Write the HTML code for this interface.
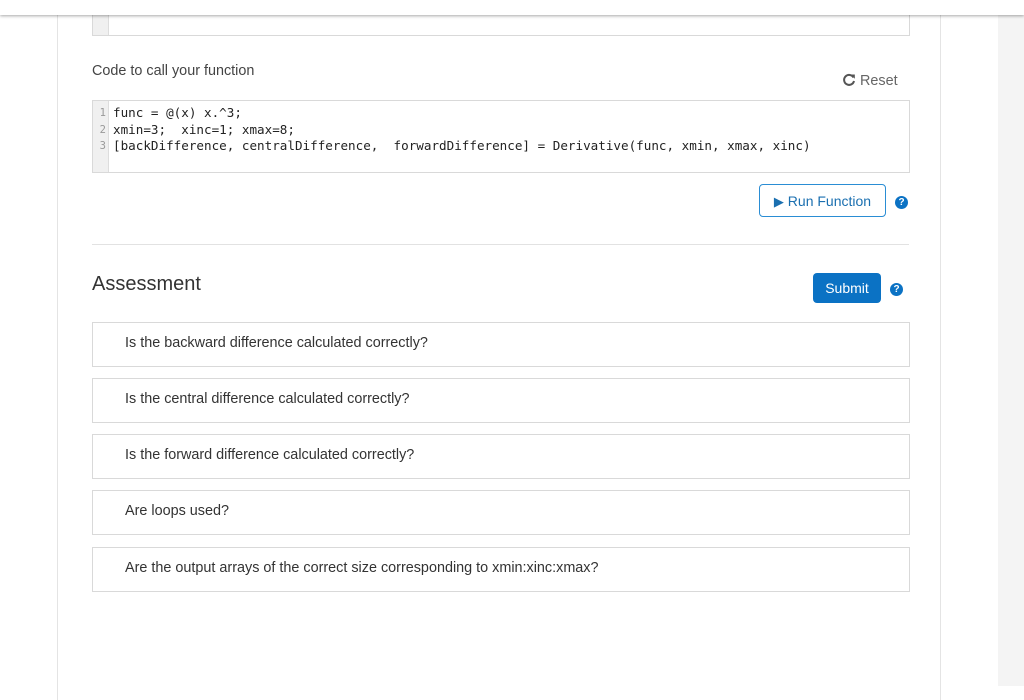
<!DOCTYPE html>
<html><head><style>
body{margin:0;width:1024px;height:686px;overflow:hidden;background:#fff;font-family:"Liberation Sans",Arial,sans-serif;color:#333;position:relative}
.topbar{position:absolute;left:0;top:0;width:1024px;height:15px;background:#fff;box-shadow:0 1px 3px rgba(0,0,0,.35);z-index:3}
.rightgray{position:absolute;left:998px;top:0;width:26px;height:686px;background:#f4f4f4}
.card{position:absolute;left:57px;top:0;width:882px;height:700px;border-left:1px solid #e4e4e4;border-right:1px solid #e4e4e4;background:#fff}
.box{position:absolute;left:92px;width:816px;border:1px solid #d9d9d9;background:#fff}
.gut{position:absolute;left:0;top:0;bottom:0;width:15px;background:#f0f0f0;border-right:1px solid #ddd}
.code{position:absolute;left:20px;top:4px;font-family:"DejaVu Sans Mono","Liberation Mono",monospace;font-size:12.6px;line-height:16.5px;white-space:pre;color:#222}
.ln{position:absolute;left:0;top:4px;width:13px;text-align:right;font-family:"DejaVu Sans Mono",monospace;font-size:10.5px;line-height:16.5px;color:#999}
.q{position:absolute;left:92px;width:816px;height:43px;border:1px solid #d9d9d9;font-size:14.4px;line-height:40px;text-indent:32px;color:#333}
</style></head><body>
<div class="rightgray"></div>
<div class="card"></div>
<div class="topbar"></div>
<div class="box" style="top:0;height:34px"><div class="gut"></div></div>
<div style="position:absolute;left:92px;top:63px;font-size:14.4px;color:#444">Code to call your function</div>
<div style="position:absolute;left:842px;top:73px;font-size:14.4px;color:#666"><svg width="14" height="14" viewBox="0 0 14 14" style="vertical-align:-2px"><path d="M11.5 4.5A5 5 0 1 0 12 8" fill="none" stroke="#555" stroke-width="2"/><path d="M8.5 1.5L12.8 1.5 12.8 5.8Z" fill="#555"/></svg> Reset</div>
<div class="box" style="top:100px;height:71px"><div class="gut"></div>
<div class="ln">1
2
3</div>
<div class="code">func = @(x) x.^3;
xmin=3;  xinc=1; xmax=8;
[backDifference, centralDifference,  forwardDifference] = Derivative(func, xmin, xmax, xinc)</div></div>
<div style="position:absolute;left:759px;top:184px;width:125px;height:31px;border:1px solid #2a8dd4;border-radius:4px;color:#1a6fb0;font-size:14px;line-height:33px;text-align:center"><span style="font-size:13px">&#9654;</span> Run Function</div>
<div style="position:absolute;left:895px;top:196px;width:13px;height:13px;border-radius:50%;background:#0b72c4;color:#fff;font-size:10px;font-weight:bold;text-align:center;line-height:13px">?</div>
<div style="position:absolute;left:92px;top:244px;width:817px;height:1px;background:#e2e2e2"></div>
<div style="position:absolute;left:92px;top:273px;font-size:20px;color:#333">Assessment</div>
<div style="position:absolute;left:813px;top:273px;width:68px;height:30px;border-radius:4px;background:#0b72c4;color:#fff;font-size:14px;line-height:31px;text-align:center">Submit</div>
<div style="position:absolute;left:890px;top:283px;width:13px;height:13px;border-radius:50%;background:#0b72c4;color:#fff;font-size:10px;font-weight:bold;text-align:center;line-height:13px">?</div>
<div class="q" style="top:322px">Is the backward difference calculated correctly?</div>
<div class="q" style="top:378px">Is the central difference calculated correctly?</div>
<div class="q" style="top:434px">Is the forward difference calculated correctly?</div>
<div class="q" style="top:490px">Are loops used?</div>
<div class="q" style="top:547px">Are the output arrays of the correct size corresponding to xmin:xinc:xmax?</div>
</body></html>
